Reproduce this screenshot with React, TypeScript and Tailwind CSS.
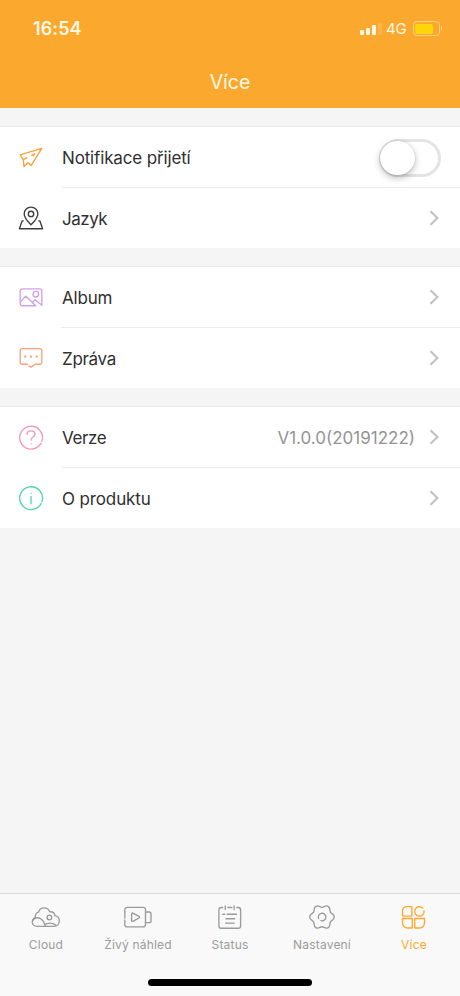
import { clsx } from "clsx";
import type { ReactNode } from "react";

function Icon({ className, width = 28, children }: { className?: string; width?: number; children: ReactNode }) {
  return (
    <svg
      width={width}
      height={28}
      viewBox={`0 0 ${width} 28`}
      fill="none"
      stroke="currentColor"
      strokeWidth={1.35}
      strokeLinecap="round"
      strokeLinejoin="round"
      className={clsx("shrink-0", className)}
    >
      {children}
    </svg>
  );
}

function PlaneIcon() {
  return (
    <Icon className="text-[#f9a23c]">
      <path d="M6.400 15.800 3.200 10.900 24.800 4.400 14.200 21.400 10.700 18.800 7 22.800 6.400 15.800 9.800 13.600M14.600 11l2.800-1.200-1.100 2" />
    </Icon>
  );
}

function MapPinIcon() {
  return (
    <Icon className="text-[#3d3d3d]">
      <path d="M14 20.800C10 16.800 7.200 13.600 7.200 9.900a6.800 6.800 0 0 1 13.600 0c0 3.700-2.800 6.900-6.800 10.900Z" />
      <circle cx="14" cy="9.900" r="2.700" />
      <path d="M6.200 16.800H5.200L2.400 24.700h23.200l-2.800-7.900h-1" />
    </Icon>
  );
}

function PhotoIcon() {
  return (
    <Icon className="text-[#d3a0ec]">
      <path d="M18.500 21.700H5.200a2 2 0 0 1-2-2V6.900a2 2 0 0 1 2-2h17.600a2 2 0 0 1 2 2v14.300" />
      <path d="m3.400 18.100 5.200-6 9.900 9.400M15.700 18.100l2.300-2.300 6.600 5.200" />
      <circle cx="18.800" cy="10.200" r="2.800" />
    </Icon>
  );
}

function MessageIcon() {
  return (
    <Icon className="text-[#f9a47a]">
      <path d="M10.500 20.200H5.200a2 2 0 0 1-2-2V6.600a2 2 0 0 1 2-2h17.600a2 2 0 0 1 2 2v11.600a2 2 0 0 1-2 2h-4.600l-4 2.900-2.200-1.300" />
      <path d="M8.200 12.700h.2M13.900 12.700h.2M19.600 12.700h.2" strokeWidth={2.2} />
    </Icon>
  );
}

function QuestionIcon() {
  return (
    <Icon className="text-[#f09ab5]">
      <path d="M24.900 17.400A11.400 11.400 0 1 0 24.100 19.200" />
      <path d="M10.100 10.300c0-2.200 1.700-3.500 3.900-3.500s4 1.300 4 3.400c0 2.600-4 3.100-4 5.900M14 19.800v.2" />
    </Icon>
  );
}

function InfoIcon() {
  return (
    <Icon className="text-[#4fd6aa]">
      <path d="M24.900 17.900A11.400 11.400 0 1 0 24.100 19.700" />
      <path d="M14 12.500v7.200M14 9.400v.1" />
    </Icon>
  );
}

function CloudIcon() {
  return (
    <Icon width={32}>
      <path d="M7 23.300c-2.800 0-4.700-1.900-4.700-4.300 0-1.900 1-3.500 3-4.300-.4-2.800 1-5.200 3.200-5.500C9.300 6.500 11.500 4.900 14 4.900c2.700 0 4.800 1.400 5.700 3.900 2.900-.3 4.900 1.200 5.200 3.900 2.700.4 4.400 2.300 4.400 5 0 3.300-2.200 5.600-5.200 5.600Z" />
      <path d="M2.700 17.200c2.300-2.500 5.600-2.900 8.300-1.200 2.300 1.500 3.500 3.600 4.200 7M14.600 21.800c3-2.200 8-2.300 11 .2" />
      <circle cx="19.400" cy="14.400" r="2.300" />
    </Icon>
  );
}

function VideoIcon() {
  return (
    <Icon width={32}>
      <path d="M2.800 15V6.700a2.300 2.300 0 0 1 2.300-2.300h16.100a2.300 2.300 0 0 1 2.300 2.300v14.900a2.300 2.300 0 0 1-2.300 2.300H5.100a2.300 2.300 0 0 1-2.300-2.300V17" />
      <path d="M23.800 9h3.300a1.900 1.900 0 0 1 1.900 1.900v6.800a1.900 1.900 0 0 1-1.900 1.900h-3.300" />
      <path d="M9.600 11v6.500c0 .8.600 1.100 1.300.8l6.100-3.300c.8-.4.800-1.200 0-1.600l-6.100-3.200c-.7-.4-1.300 0-1.300.8Z" />
    </Icon>
  );
}

function StatusIcon() {
  return (
    <Icon width={32}>
      <path d="M8.600 4.500H7.200A2.300 2.300 0 0 0 4.900 6.800v16.100a2.300 2.300 0 0 0 2.300 2.300h17.100a2.300 2.300 0 0 0 2.300-2.300V6.800a2.300 2.300 0 0 0-2.300-2.300h-1.400M13.800 4.500h4" />
      <path d="M11.300 2.900v3.500M20.100 2.900v3.500M8.800 11.200h2M13.200 11.200h9.400M12 15.700h8.700M11.600 20.100h8.700" />
    </Icon>
  );
}

function GearIcon() {
  return (
    <Icon width={32}>
      <path d="M28.300 14C28.300 17 25.400 17.100 24.400 18.850C23.400 20.600 24.750 23.150 22.150 24.650C19.550 26.150 18 23.700 16 23.700C14 23.700 12.450 26.150 9.850 24.650C7.250 23.150 8.600 20.600 7.600 18.850C6.600 17.100 3.700 17 3.700 14C3.700 11 6.600 10.900 7.600 9.150C8.600 7.400 7.250 4.850 9.850 3.350C12.450 1.850 14 4.300 16 4.300C18 4.300 19.550 1.850 22.150 3.350C24.750 4.850 23.400 7.400 24.400 9.150C25.400 10.900 28.300 11 28.300 14Z" />
      <path d="M12.600 15.600a3.800 3.800 0 1 1 2.400 2.100" />
    </Icon>
  );
}

function GridIcon() {
  return (
    <Icon width={32}>
      <path d="M13.900 13.100H4.500V7.600a4 4 0 0 1 4-4h5.400Z" />
      <path d="M24.700 5.100A4.700 4.700 0 1 0 26 7.600" />
      <path d="M4.500 15.500h9.800V25H9.500a5 5 0 0 1-5-5Z" />
      <path d="M16.800 15.500h9.700V20a5 5 0 0 1-5 5h-4.700Z" />
    </Icon>
  );
}

function Chevron() {
  return (
    <svg width="10" height="16" viewBox="0 0 10 16" fill="none" stroke="#c2c2c4" strokeWidth={2.2} className="ml-[14px] mr-[1px] shrink-0">
      <path d="m1.500 1.200 7 6.800-7 6.800" />
    </svg>
  );
}

function Toggle() {
  return (
    <span className="-mr-[1px] mt-[1px] flex h-[38px] w-[62px] items-center rounded-full border-[3px] border-[#e4e4e4] bg-white">
      <span className="-ml-0.5 h-[34px] w-[35px] rounded-full bg-white shadow-[0_3px_7px_rgba(0,0,0,0.25),0_0_2px_rgba(0,0,0,0.18)]" />
    </span>
  );
}

type Item = { label: string; icon: () => ReactNode; spacing: string; value?: string; toggle?: boolean };

const sections: Item[][] = [
  [
    { label: "Notifikace přijetí", icon: PlaneIcon, spacing: "tracking-[-0.15px]", toggle: true },
    { label: "Jazyk", icon: MapPinIcon, spacing: "tracking-[-0.5px]" },
  ],
  [
    { label: "Album", icon: PhotoIcon, spacing: "tracking-[-0.2px]" },
    { label: "Zpráva", icon: MessageIcon, spacing: "tracking-[-0.3px]" },
  ],
  [
    { label: "Verze", icon: QuestionIcon, spacing: "tracking-[-0.4px]", value: "V1.0.0(20191222)" },
    { label: "O produktu", icon: InfoIcon, spacing: "tracking-[-0.13px]" },
  ],
];

const tabs = [
  { label: "Cloud", icon: CloudIcon },
  { label: "Živý náhled", icon: VideoIcon },
  { label: "Status", icon: StatusIcon },
  { label: "Nastavení", icon: GearIcon },
  { label: "Více", icon: GridIcon, active: true },
];

function Row({ item, divided }: { item: Item; divided: boolean }) {
  const ItemIcon = item.icon;
  return (
    <div className={clsx("flex pl-[17px]", divided ? "h-[61px]" : "h-[60px]")}>
      <div className="flex w-11 items-center">
        <ItemIcon />
      </div>
      <div className={clsx("flex flex-1 items-center pr-5", divided && "border-b border-[#ececec]")}>
        <span className={clsx("pl-[1px] pt-[3px] text-[17px] text-[#303030]", item.spacing)}>{item.label}</span>
        <span className="ml-auto pt-[3px] text-[17px] text-[#949494]">{item.value}</span>
        {item.toggle ? <Toggle /> : <Chevron />}
      </div>
    </div>
  );
}

function StatusBar() {
  return (
    <div className="flex h-[57px] items-center pl-[33px] pr-[18px] text-[#fff8e4]">
      <span className="text-[18px] font-semibold tracking-[0.1px]">16:54</span>
      <div className="ml-auto flex items-center">
        <div className="flex h-3 items-end gap-[2px]">
          <span className="h-[5px] w-1 rounded-[1px] bg-current" />
          <span className="h-[7px] w-1 rounded-[1px] bg-current" />
          <span className="h-[10px] w-1 rounded-[1px] bg-current" />
          <span className="h-3 w-1 rounded-[1px] bg-current opacity-15" />
        </div>
        <span className="ml-1 pt-[1px] text-[15px] tracking-[-0.2px]">4G</span>
        <span className="ml-[6px] flex h-[15px] w-[27px] rounded-[4px] border border-[#fdcf82] p-[1.5px]">
          <span className="w-[18px] rounded-[2px] bg-[#ffd60a]" />
        </span>
        <span className="ml-[1px] h-[5px] w-[1.5px] rounded-r-full bg-[#fdcf82]" />
      </div>
    </div>
  );
}

export default function App() {
  return (
    <div className="flex h-[996px] w-[460px] flex-col bg-[#f5f5f5] font-['Inter','Liberation_Sans',sans-serif]">
      <header className="h-[108px] bg-[#fba92e]">
        <StatusBar />
        <h1 className="text-center text-[19.5px] leading-[50px] text-[#fff8e8]">Více</h1>
      </header>

      <main className="flex flex-1 flex-col gap-[18px] pt-[18px]">
        {sections.map((section, i) => (
          <section key={i} className="border-t border-[#e9e9e9] bg-white">
            {section.map((item, j) => (
              <Row key={item.label} item={item} divided={j < section.length - 1} />
            ))}
          </section>
        ))}
      </main>

      <nav className="flex h-[103px] flex-col items-center border-t border-[#dadada] bg-[#f9f9f9]">
        <div className="flex w-full pt-[9px]">
          {tabs.map(({ label, icon: TabIcon, active }) => (
            <div key={label} className={clsx("flex flex-1 flex-col items-center", active ? "text-[#fba92e]" : "text-[#9b9b9b]")}>
              <TabIcon />
              <span className="mt-1 whitespace-nowrap text-[12px] leading-5 tracking-[0.2px]">{label}</span>
            </div>
          ))}
        </div>
        <div className="mt-6 h-[7px] w-[164px] rounded-full bg-black" />
      </nav>
    </div>
  );
}
